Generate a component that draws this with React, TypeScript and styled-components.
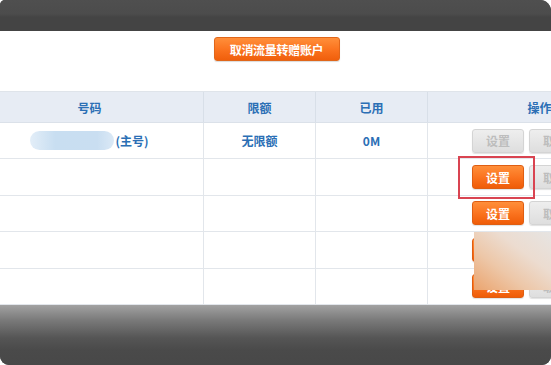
import React from "react";
import styled, { createGlobalStyle } from "styled-components";

const GlobalStyle = createGlobalStyle`
  html, body {
    margin: 0;
    padding: 0;
    background: #ffffff;
  }
  body {
    font-family: "Noto Sans CJK SC", "Noto Sans", "Liberation Sans", sans-serif;
  }
`;

type Account = {
  number?: string;
  limit?: string;
  used?: string;
  disabled?: boolean;
  highlight?: boolean;
};

const rows: Account[] = [
  { number: "(主号)", limit: "无限额", used: "0M", disabled: true },
  { highlight: true },
  {},
  {},
  {},
];

function App() {
  return (
    <>
      <GlobalStyle />
      <Frame>
        <TopBar />
        <Content>
          <Toolbar>
            <CancelButton>取消流量转赠账户</CancelButton>
          </Toolbar>
          <Table>
            <HeaderRow>
              <HeadCell>号码</HeadCell>
              <HeadCell>限额</HeadCell>
              <HeadCell>已用</HeadCell>
              <HeadCell>操作</HeadCell>
            </HeaderRow>
            {rows.map((row, i) => (
              <Row key={i}>
                <Cell>
                  {row.number && (
                    <>
                      <Masked />
                      {row.number}
                    </>
                  )}
                </Cell>
                <Cell>{row.limit}</Cell>
                <Cell>{row.used}</Cell>
                <OpsCell>
                  {row.highlight && <Highlight />}
                  <ActionButton $disabled={row.disabled}>设置</ActionButton>
                  <ActionButton $disabled>取消</ActionButton>
                </OpsCell>
              </Row>
            ))}
          </Table>
          <Watermark />
        </Content>
        <BottomBar />
      </Frame>
    </>
  );
}

export default App;

const Frame = styled.div`
  width: 551px;
  height: 365px;
  display: flex;
  flex-direction: column;
  background: #484848;
  border-radius: 5px 11px 9px 9px;
  overflow: hidden;
`;

const TopBar = styled.div`
  height: 31px;
  flex: none;
  background: linear-gradient(#4f4f4f 0%, #4c4c4c 45%, #444444 55%, #444444 100%);
`;

const Content = styled.div`
  position: relative;
  height: 274px;
  flex: none;
  background: #ffffff;
  overflow: hidden;
`;

const Toolbar = styled.div`
  display: flex;
  justify-content: center;
  padding: 6px 0 0 2px;
  height: 60px;
  box-sizing: border-box;
`;

const CancelButton = styled.button`
  width: 126px;
  height: 24px;
  padding: 0;
  border: 1px solid #e0661a;
  border-radius: 3px;
  background: linear-gradient(#ff8f3a 0%, #fb7420 50%, #f05f0c 100%);
  color: #ffffff;
  font-family: inherit;
  font-size: 12px;
  font-weight: 700;
  letter-spacing: -0.3px;
  box-shadow: 0 1px 1px rgba(0, 0, 0, 0.15);
`;

const Table = styled.div`
  width: 676px;
  margin-left: -24px;
  border-top: 1px solid #dfe4ea;
`;

const columns = "228px 112px 112px 224px";

const HeaderRow = styled.div`
  display: grid;
  grid-template-columns: ${columns};
  height: 31px;
  background: #e7ecf4;
  border-bottom: 1px solid #dbe1e9;
  box-sizing: border-box;
`;

const HeadCell = styled.div`
  display: flex;
  align-items: center;
  justify-content: center;
  border-right: 1px solid #d8dfe8;
  color: #2b6fb5;
  font-size: 12px;
  font-weight: 700;
`;

const Row = styled.div`
  display: grid;
  grid-template-columns: ${columns};
  height: 36.4px;
  border-bottom: 1px solid #e2e6eb;
  box-sizing: border-box;
`;

const Cell = styled.div`
  display: flex;
  align-items: center;
  justify-content: center;
  border-right: 1px solid #e2e6eb;
  color: #2b6fb5;
  font-size: 12px;
  font-weight: 700;
`;

const Masked = styled.span`
  display: inline-block;
  width: 84px;
  height: 19px;
  margin-right: 1px;
  border-radius: 10px;
  background: linear-gradient(90deg, #e3eef8 0%, #c8def1 30%, #c9def1 80%, #dbe9f6 100%);
  filter: blur(0.6px);
`;

const OpsCell = styled.div`
  position: relative;
  display: flex;
  align-items: center;
  gap: 5px;
  padding-left: 44px;
`;

const ActionButton = styled.button<{ $disabled?: boolean }>`
  width: 52px;
  height: 24px;
  flex: none;
  padding: 0;
  border-radius: 3px;
  font-family: inherit;
  font-size: 12px;
  font-weight: 700;
  border: 1px solid ${(p) => (p.$disabled ? "#d4d4d4" : "#df5e12")};
  background: ${(p) =>
    p.$disabled
      ? "linear-gradient(#eeeeee, #dedede)"
      : "linear-gradient(#ff8f3a 0%, #fb7420 50%, #ef5c08 100%)"};
  color: ${(p) => (p.$disabled ? "#bdbdbd" : "#ffffff")};
  box-shadow: 0 1px 1px rgba(0, 0, 0, 0.12);
`;

const Highlight = styled.div`
  position: absolute;
  left: 30px;
  top: -3px;
  width: 77px;
  height: 43px;
  border: 2px solid #d94451;
  box-sizing: border-box;
  pointer-events: none;
`;

const Watermark = styled.div`
  position: absolute;
  left: 474px;
  top: 201px;
  width: 77px;
  height: 58px;
  background: linear-gradient(to top right, #eba46e 0%, #edc7a8 35%, #ecdcd0 65%, #e6e4e2 100%);
`;

const BottomBar = styled.div`
  flex: 1;
  background: linear-gradient(#a2a2a2 0%, #7a7a7a 25%, #555555 55%, #4a4a4a 75%, #484848 100%);
`;
